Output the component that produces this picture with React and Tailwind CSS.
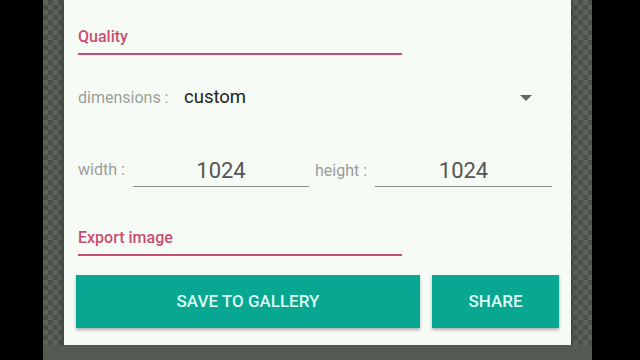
const App = () => {
  return (
    <div
      className="w-[640px] h-[360px] bg-black flex overflow-hidden"
      style={{ fontFamily: 'Roboto, "Liberation Sans", sans-serif' }}
    >
      <div className="ml-[43px] w-[549px] h-full bg-[repeating-conic-gradient(#4b5049_0%_25%,#5c6259_0%_50%)] bg-[length:10px_10px] flex flex-col">
        <div className="mx-[21px] h-[345px] bg-[#f7fbf6] shadow-[0_2px_6px_rgba(0,0,0,0.45)] px-[14px] flex flex-col">
          <div className="pt-[27px] w-[324px] border-b-2 border-[#c94f72] pb-[6px] text-[16px] font-medium text-[#c94f72] leading-[20px]">
            Quality
          </div>

          <div className="mt-[31px] flex items-center h-[24px]">
            <span className="w-[106px] text-[16px] text-[#9a9d99]">dimensions :</span>
            <span className="text-[18.5px] text-[#222]">custom</span>
            <span className="ml-auto mr-[25px] w-0 h-0 border-l-[6px] border-r-[6px] border-t-[6px] border-l-transparent border-r-transparent border-t-[#666]"></span>
          </div>

          <div className="mt-[45px] flex items-end h-[32px]">
            <span className="w-[55px] text-[16px] text-[#9a9d99] pb-[5px]">width :</span>
            <div className="w-[176px] border-b border-[#8a8d89] text-center text-[22px] text-[#555] pb-[2px] leading-[26px]">
              1024
            </div>
            <span className="w-[66px] pl-[6px] text-[16px] text-[#9a9d99] pb-[4px]">height :</span>
            <div className="w-[177px] border-b border-[#8a8d89] text-center text-[22px] text-[#555] pb-[2px] leading-[26px]">
              1024
            </div>
          </div>

          <div className="mt-[41px] w-[324px] border-b-2 border-[#c94f72] pb-[6px] text-[16px] font-medium text-[#c94f72] leading-[20px]">
            Export image
          </div>

          <div className="mt-[19px] -mx-[2px] flex gap-[12px]">
            <button className="shrink-0 w-[344px] h-[53px] bg-[#07a791] text-[#dffaf4] text-[17px] font-medium shadow-[0_2px_3px_rgba(0,0,0,0.3)]">
              SAVE TO GALLERY
            </button>
            <button className="shrink-0 w-[127px] h-[53px] bg-[#07a791] text-[#dffaf4] text-[17px] font-medium shadow-[0_2px_3px_rgba(0,0,0,0.3)]">
              SHARE
            </button>
          </div>
        </div>
        <div className="flex-1 bg-[#545a52]"></div>
      </div>
    </div>
  );
};

export default App;
